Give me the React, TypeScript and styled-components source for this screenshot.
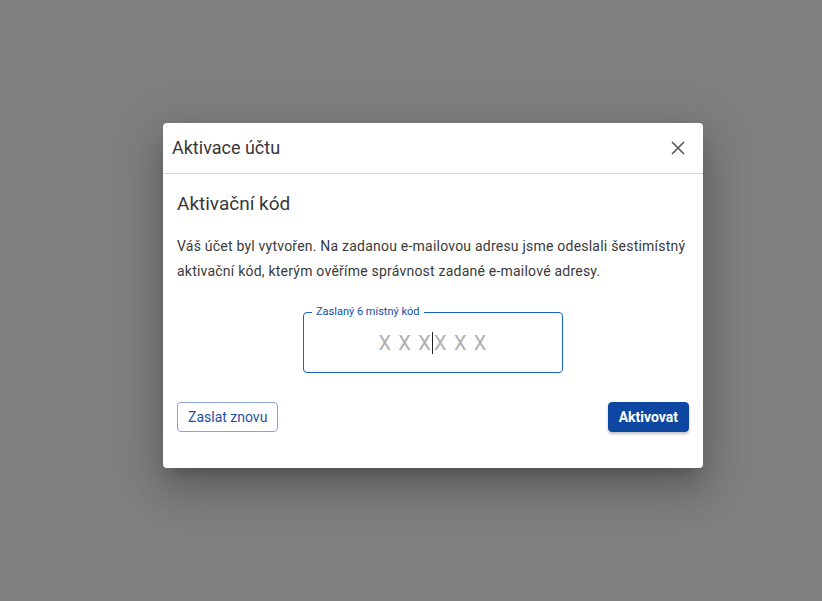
import styled, { createGlobalStyle } from "styled-components";

const GlobalStyle = createGlobalStyle`
  html, body {
    margin: 0;
    padding: 0;
    height: 100%;
  }
  body {
    font-family: Roboto, "Liberation Sans", Arial, sans-serif;
    background: #ffffff;
  }
  #root {
    height: 100%;
  }
`;

const Backdrop = styled.div`
  width: 100vw;
  height: 100vh;
  background: rgba(0, 0, 0, 0.5);
  display: flex;
  justify-content: center;
  padding: 123px 0 0 44px;
  box-sizing: border-box;
`;

const Dialog = styled.div`
  width: 540px;
  height: 345px;
  background: #fff;
  border-radius: 4px;
  box-shadow: 0 11px 15px -7px rgba(0, 0, 0, 0.2), 0 24px 38px 3px rgba(0, 0, 0, 0.14),
    0 9px 46px 8px rgba(0, 0, 0, 0.12);
  display: flex;
  flex-direction: column;
`;

const Header = styled.div`
  height: 50px;
  display: flex;
  align-items: center;
  justify-content: space-between;
  padding: 0 12px 0 9px;
  border-bottom: 1px solid #d5d5dc;
`;

const Title = styled.h2`
  margin: 0 0 2px;
  font-size: 18px;
  font-weight: 400;
  color: #383838;
`;

const CloseButton = styled.button`
  width: 26px;
  height: 26px;
  border: 0;
  padding: 0;
  background: transparent;
  display: flex;
  align-items: center;
  justify-content: center;
  cursor: pointer;
  color: #555;
`;

const Body = styled.div`
  padding: 18px 14px 0;
  display: flex;
  flex-direction: column;
`;

const Subtitle = styled.h3`
  margin: 0;
  font-size: 19px;
  line-height: 24px;
  font-weight: 400;
  color: #383838;
`;

const Text = styled.p`
  margin: 18px 0 0;
  font-size: 14px;
  line-height: 25px;
  letter-spacing: 0.22px;
  color: #3a3a3a;
`;

const CodeField = styled.fieldset`
  align-self: center;
  width: 260px;
  height: 67px;
  box-sizing: border-box;
  margin: 22px 0 0;
  padding: 0;
  border: 1px solid #1565c0;
  border-radius: 4px;
`;

const Legend = styled.legend`
  margin-left: 8px;
  padding: 0 4px;
  font-size: 11px;
  line-height: 12px;
  color: #1250a8;
`;

const CodeValue = styled.div`
  height: 52px;
  display: flex;
  align-items: center;
  justify-content: center;
  padding-bottom: 2px;
  box-sizing: border-box;
  font-size: 20px;
  letter-spacing: 1.2px;
  color: #b0b0b0;
  white-space: pre;
`;

const Caret = styled.span`
  display: inline-block;
  width: 1px;
  height: 22px;
  margin-right: 1px;
  background: #222;
`;

const Actions = styled.div`
  display: flex;
  justify-content: space-between;
  margin-top: 29px;
`;

const Button = styled.button<{ $primary?: boolean }>`
  height: 30px;
  padding: 0 10px;
  border-radius: 4px;
  font-family: Roboto, "Liberation Sans", Arial, sans-serif;
  font-size: 14px;
  cursor: pointer;
  ${({ $primary }) =>
    $primary
      ? `
    background: #0d47a1;
    color: #fff;
    border: 1px solid #0d47a1;
    font-weight: 700;
    box-shadow: 0 2px 3px rgba(0, 0, 0, 0.25);
  `
      : `
    background: #fff;
    color: #1f4ea3;
    border: 1px solid #8aa4d8;
    font-weight: 400;
  `}
`;

export default function App() {
  return (
    <>
      <GlobalStyle />
      <Backdrop>
        <Dialog>
          <Header>
            <Title>Aktivace účtu</Title>
            <CloseButton aria-label="Zavřít">
              <svg width="14" height="14" viewBox="0 0 14 14">
                <path d="M1 1 L13 13 M13 1 L1 13" stroke="currentColor" strokeWidth="1.6" />
              </svg>
            </CloseButton>
          </Header>
          <Body>
            <Subtitle>Aktivační kód</Subtitle>
            <Text>
              Váš účet byl vytvořen. Na zadanou e-mailovou adresu jsme odeslali šestimístný aktivační kód, kterým
              ověříme správnost zadané e-mailové adresy.
            </Text>
            <CodeField>
              <Legend>Zaslaný 6 místný kód</Legend>
              <CodeValue>
                X X X<Caret />X X X
              </CodeValue>
            </CodeField>
            <Actions>
              <Button>Zaslat znovu</Button>
              <Button $primary>Aktivovat</Button>
            </Actions>
          </Body>
        </Dialog>
      </Backdrop>
    </>
  );
}
